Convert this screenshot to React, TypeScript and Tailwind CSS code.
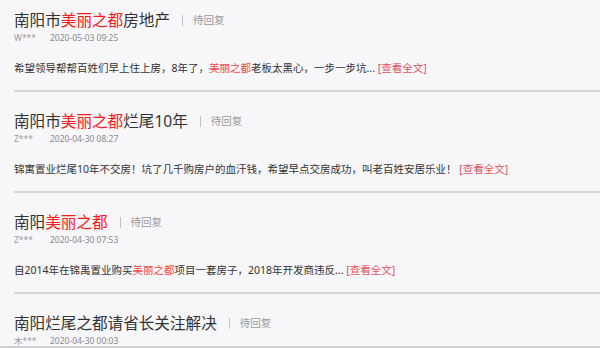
import React from "react";

type Item = {
  title: React.ReactNode;
  user: string;
  date: string;
  body?: React.ReactNode;
};

const R = ({ children }: { children: React.ReactNode }) => (
  <span className="text-[#f41d1d]">{children}</span>
);
const BR = ({ children }: { children: React.ReactNode }) => (
  <span className="text-[#f24545]">{children}</span>
);
const More = () => <span className="text-[#e0535f]">[查看全文]</span>;

const items: Item[] = [
  {
    title: (
      <>
        南阳市<R>美丽之都</R>房地产
      </>
    ),
    user: "W***",
    date: "2020-05-03 09:25",
    body: (
      <>
        希望领导帮帮百姓们早上住上房，8年了，<BR>美丽之都</BR>老板太黑心，一步一步坑... <More />
      </>
    ),
  },
  {
    title: (
      <>
        南阳市<R>美丽之都</R>烂尾10年
      </>
    ),
    user: "Z***",
    date: "2020-04-30 08:27",
    body: (
      <>
        锦寓置业烂尾10年不交房！坑了几千购房户的血汗钱，希望早点交房成功，叫老百姓安居乐业！ <More />
      </>
    ),
  },
  {
    title: (
      <>
        南阳<R>美丽之都</R>
      </>
    ),
    user: "Z***",
    date: "2020-04-30 07:53",
    body: (
      <>
        自2014年在锦禹置业购买<BR>美丽之都</BR>项目一套房子，2018年开发商违反... <More />
      </>
    ),
  },
  {
    title: <>南阳烂尾之都请省长关注解决</>,
    user: "木***",
    date: "2020-04-30 00:03",
  },
];

export default function App() {
  return (
    <div
      className="h-[348px] w-[600px] overflow-hidden bg-[#f7f6f9] border-b-2 border-[#cfcfcf]"
      style={{ fontFamily: '"Noto Sans", "Noto Sans CJK SC", sans-serif' }}
    >
      {items.map((it, i) => (
        <div key={i} className="ml-[14px] pt-[19px] first:pt-[10px]">
          <div className="flex items-center h-[20px]">
            <span className="text-[15.6px] leading-[20px] text-[#333333] whitespace-nowrap">
              {it.title}
            </span>
            <div className="ml-[12px] w-px h-[11px] bg-[#c2c2c2]" />
            <span className="ml-[10px] text-[10.5px] leading-[20px] text-[#9a9a9a]">
              待回复
            </span>
          </div>
          <div className="mt-[2px] h-[12px] flex items-center text-[8.5px] leading-[12px] whitespace-nowrap">
            <span className="w-[36px] text-[#9a9a9a]">{it.user}</span>
            <span className="text-[#8a8a8a]">{it.date}</span>
          </div>
          {it.body && (
            <>
              <div className="mt-[16px] h-[16px] text-[10.5px] leading-[16px] text-[#333333] whitespace-nowrap">
                {it.body}
              </div>
              <div className="mt-[14px] h-[2px] bg-[#d6d6d6]" />
            </>
          )}
        </div>
      ))}
    </div>
  );
}
